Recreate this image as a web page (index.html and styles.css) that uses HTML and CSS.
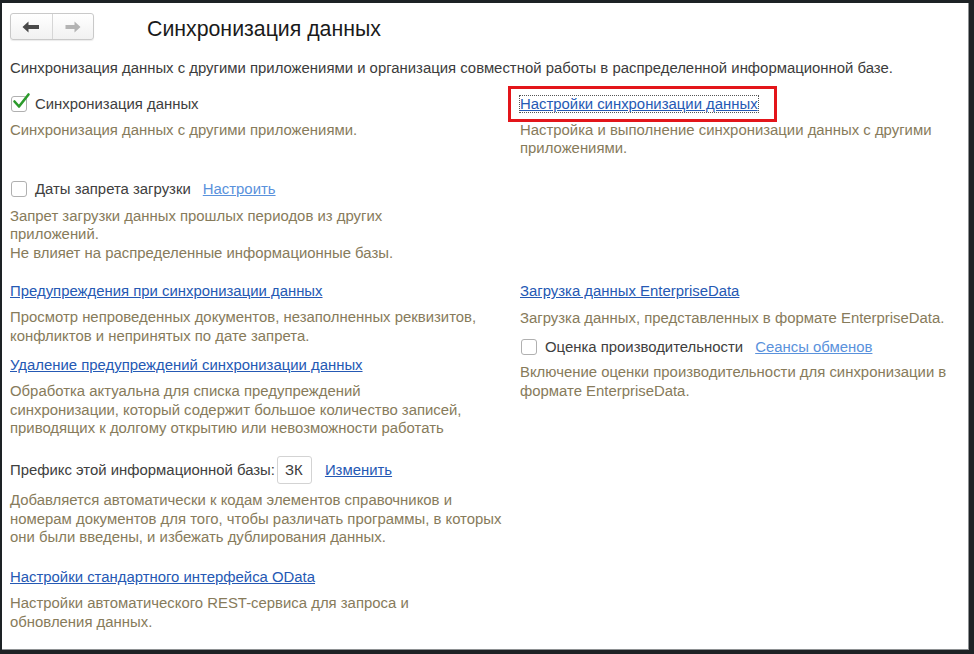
FILE: index.html
```html
<!DOCTYPE html>
<html lang="ru">
<head>
<meta charset="utf-8">
<title>Синхронизация данных</title>
<link rel="stylesheet" href="styles.css">
</head>
<body>
<div class="frame">
  <div class="header">
    <div class="nav">
      <button class="nav-btn" aria-label="Назад">
        <svg width="18" height="12" viewBox="0 0 18 12"><path d="M0.5 6 L6.5 0.5 L6.5 4 L17 4 L17 8 L6.5 8 L6.5 11.5 Z" fill="#4a4a4a"/></svg>
      </button>
      <button class="nav-btn nav-btn-right" aria-label="Вперёд">
        <svg width="16" height="12" viewBox="0 0 16 12"><path d="M15.5 6 L9.5 0.5 L9.5 4 L0.5 4 L0.5 8 L9.5 8 L9.5 11.5 Z" fill="#b4b4b4"/></svg>
      </button>
    </div>
    <h1 class="title">Синхронизация данных</h1>
  </div>
  <p class="intro">Синхронизация данных с другими приложениями и организация совместной работы в распределенной информационной базе.</p>

  <div class="grid">
    <div class="col">
      <label class="check-row">
        <span class="checkbox checked">
          <svg width="20" height="20" viewBox="0 0 20 20"><path d="M3.5 9.5 L8 14.5 L17.5 2.5" fill="none" stroke="#2b9a2b" stroke-width="2.6" stroke-linecap="round" stroke-linejoin="round"/></svg>
        </span>
        <span class="label">Синхронизация данных</span>
      </label>
      <p class="desc d-sync">Синхронизация данных с другими приложениями.</p>

      <div class="check-row cb-dates">
        <span class="checkbox"></span>
        <span class="label">Даты запрета загрузки</span>
        <a class="link light" href="#">Настроить</a>
      </div>
      <p class="desc d-dates">Запрет загрузки данных прошлых периодов из других<br>приложений.<br>Не влияет на распределенные информационные базы.</p>
    </div>
    <div class="col">
      <div class="focus-wrap">
        <a class="link focused" href="#">Настройки синхронизации данных</a>
      </div>
      <p class="desc d-settings">Настройка и выполнение синхронизации данных с другими<br>приложениями.</p>
    </div>

    <div class="col row2">
      <a class="link" href="#">Предупреждения при синхронизации данных</a>
      <p class="desc d-link">Просмотр непроведенных документов, незаполненных реквизитов,<br>конфликтов и непринятых по дате запрета.</p>

      <a class="link l-delete" href="#">Удаление предупреждений синхронизации данных</a>
      <p class="desc d-link">Обработка актуальна для списка предупреждений<br>синхронизации, который содержит большое количество записей,<br>приводящих к долгому открытию или невозможности работать</p>

      <div class="prefix-row">
        <span class="label">Префикс этой информационной базы:</span>
        <span class="input">ЗК</span>
        <a class="link" href="#">Изменить</a>
      </div>
      <p class="desc d-prefix">Добавляется автоматически к кодам элементов справочников и<br>номерам документов для того, чтобы различать программы, в которых<br>они были введены, и избежать дублирования данных.</p>

      <a class="link l-odata" href="#">Настройки стандартного интерфейса OData</a>
      <p class="desc d-odata">Настройки автоматического REST-сервиса для запроса и<br>обновления данных.</p>
    </div>
    <div class="col row2">
      <a class="link" href="#">Загрузка данных EnterpriseData</a>
      <p class="desc d-ed">Загрузка данных, представленных в формате EnterpriseData.</p>
      <div class="check-row cb-perf">
        <span class="checkbox"></span>
        <span class="label">Оценка производительности</span>
        <a class="link light" href="#">Сеансы обменов</a>
      </div>
      <p class="desc d-perf">Включение оценки производительности для синхронизации в<br>формате EnterpriseData.</p>
    </div>
  </div>
</div>
</body>
</html>
```

FILE: styles.css
```css
html, body {
  margin: 0;
  padding: 0;
  background: #1d2225;
}
body {
  width: 974px;
  height: 654px;
  overflow: hidden;
  font-family: "Liberation Sans", Arial, sans-serif;
  font-size: 14.9px;
}
.frame {
  margin: 3px 0 0 2px;
  width: 967px;
  height: 647px;
  background: #ffffff;
  border-right: 1px solid #8e9193;
  border-bottom: 1px solid #8e9193;
  box-sizing: border-box;
  padding: 0 0 0 8px;
}
.header {
  display: flex;
  align-items: center;
  padding-top: 10px;
  height: 27px;
}
.nav {
  display: flex;
  width: 84px;
  height: 27px;
  border: 1px solid #c9c9c9;
  border-radius: 3px;
  box-sizing: border-box;
  background: linear-gradient(#ffffff, #f1f1f1);
  box-shadow: 0 1px 1px rgba(0,0,0,0.08);
}
.nav-btn {
  flex: 1;
  border: 0;
  background: transparent;
  padding: 0;
  display: flex;
  align-items: center;
  justify-content: center;
}
.nav-btn-right {
  border-left: 1px solid #d6d6d6;
}
.title {
  margin: 4px 0 0 53px;
  font-size: 21.3px;
  line-height: 26px;
  font-weight: normal;
  color: #1a1a1a;
}
.intro {
  margin: 19px 0 0 0;
  color: #3c3c3c;
  line-height: 18px;
}
.grid {
  display: grid;
  grid-template-columns: 510px 440px;
  margin-top: 17px;
}
.row2 {
  margin-top: 19px;
}
.col {
  display: flex;
  flex-direction: column;
  align-items: flex-start;
}
.check-row {
  display: flex;
  align-items: center;
  height: 20px;
}
.checkbox {
  position: relative;
  width: 16px;
  height: 16px;
  border: 1px solid #b0b0b0;
  border-radius: 3px;
  margin: 0 8px 0 1px;
  background: #fff;
  box-sizing: border-box;
  flex: none;
}
.checkbox svg {
  position: absolute;
  left: -1px;
  top: -5px;
}
.label {
  color: #404040;
}
.desc {
  margin: 0;
  color: #877b5b;
  line-height: 18.5px;
  white-space: nowrap;
}
.link {
  color: #2559b4;
  text-decoration: underline;
  line-height: 20px;
}
.check-row .link.light {
  margin-left: 12px;
  color: #5a92dc;
}

.d-sync { margin-top: 7px; }
.cb-dates { margin-top: 39.5px; }
.d-dates { margin-top: 7.75px; }
.d-link { margin-top: 6.75px; }
.l-delete { margin-top: 10.25px; }
.prefix-row {
  display: flex;
  align-items: center;
  margin-top: 18.75px;
  height: 28px;
}
.d-prefix { margin-top: 6.75px; }
.l-odata { margin-top: 20.75px; }
.d-odata { margin-top: 7px; }
.d-settings { margin-top: 1.75px; }
.d-ed { margin-top: 7.75px; }
.cb-perf { margin-top: 9.75px; }
.d-perf { margin-top: 5.75px; }

.focus-wrap {
  outline: 3px solid #e3151a;
  padding: 5px 16px 5px 9px;
  margin: -5px 0 0 -9px;
}
.focused {
  outline: 1px dotted #555;
  outline-offset: 0;
}
.input {
  width: 35px;
  height: 28px;
  box-sizing: border-box;
  border: 1px solid #d3d3d3;
  border-radius: 3px;
  margin-left: 2px;
  padding-left: 7px;
  display: flex;
  align-items: center;
  color: #3c3c3c;
}
.prefix-row .link {
  margin-left: 13px;
}
```
